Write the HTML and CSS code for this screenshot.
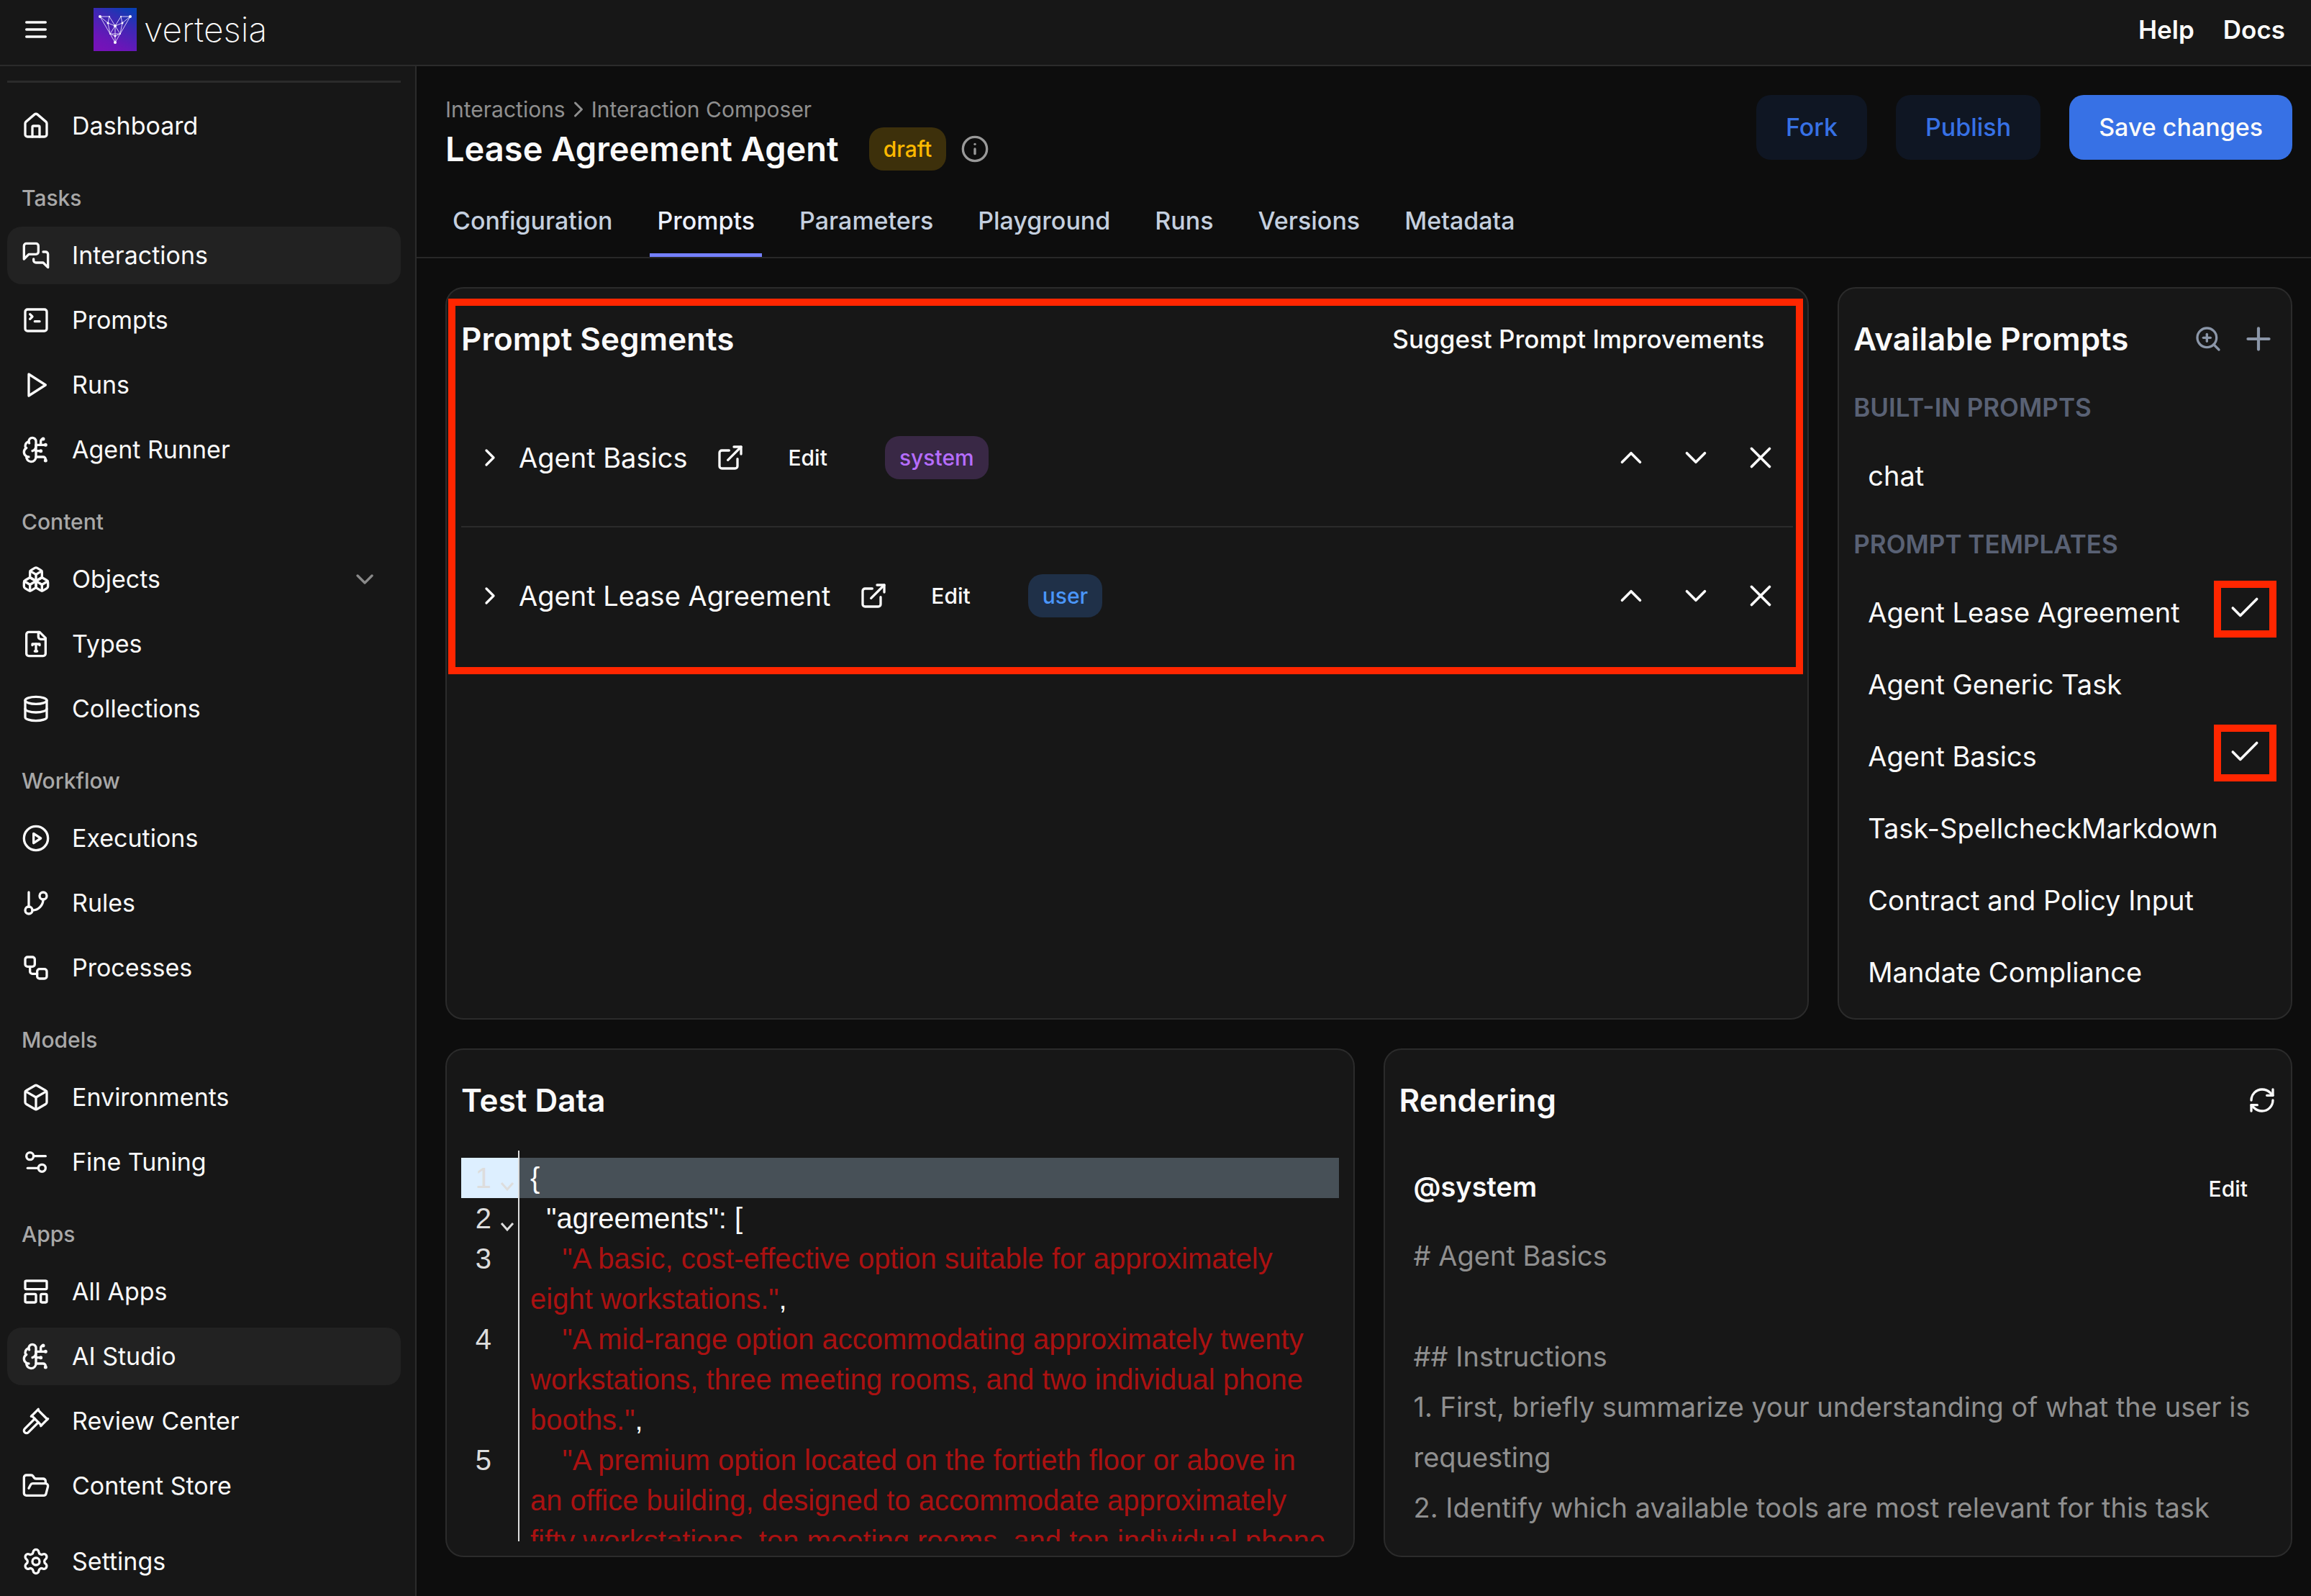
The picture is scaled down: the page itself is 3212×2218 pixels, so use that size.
FILE: index.html
```html
<!DOCTYPE html>
<html lang="en">

<head>
    <meta charset="UTF-8">
    <meta name="viewport" content="width=device-width, initial-scale=1.0">
    <title>Lease Agreement Agent - Vertesia</title>
    <link rel="stylesheet" href="styles.css">
</head>

<body>
    <!-- icon sprite -->
    <svg class="sprite" xmlns="http://www.w3.org/2000/svg">
        <symbol id="i-menu" viewBox="0 0 24 24"><path d="M4 6h16M4 12h16M4 18h16"/></symbol>
        <symbol id="i-home" viewBox="0 0 24 24"><path d="M15 21v-8a1 1 0 0 0-1-1h-4a1 1 0 0 0-1 1v8"/><path d="M3 10a2 2 0 0 1 .709-1.528l7-5.999a2 2 0 0 1 2.582 0l7 5.999A2 2 0 0 1 21 10v9a2 2 0 0 1-2 2H5a2 2 0 0 1-2-2z"/></symbol>
        <symbol id="i-messages" viewBox="0 0 24 24"><path d="M14 9a2 2 0 0 1-2 2H6l-4 4V4a2 2 0 0 1 2-2h8a2 2 0 0 1 2 2z"/><path d="M18 9h2a2 2 0 0 1 2 2v11l-4-4h-6a2 2 0 0 1-2-2v-1"/></symbol>
        <symbol id="i-terminal" viewBox="0 0 24 24"><path d="m7 11 2-2-2-2"/><path d="M11 13h4"/><rect width="18" height="18" x="3" y="3" rx="2"/></symbol>
        <symbol id="i-play" viewBox="0 0 24 24"><polygon points="6 3 20 12 6 21 6 3"/></symbol>
        <symbol id="i-brain" viewBox="0 0 24 24"><path d="M12 5a3 3 0 1 0-5.997.125 4 4 0 0 0-2.526 5.77 4 4 0 0 0 .556 6.588A4 4 0 1 0 12 18Z"/><path d="M9 13a4.5 4.5 0 0 0 3-4"/><path d="M6.003 5.125A3 3 0 0 0 6.401 6.5"/><path d="M3.477 10.896a4 4 0 0 1 .585-.396"/><path d="M6 18a4 4 0 0 1-1.967-.516"/><path d="M12 13h4"/><path d="M12 18h6a2 2 0 0 1 2 2v1"/><path d="M12 8h8"/><path d="M16 8V5a2 2 0 0 1 2-2"/><circle cx="16" cy="13" r=".5"/><circle cx="18" cy="3" r=".5"/><circle cx="20" cy="21" r=".5"/><circle cx="20" cy="8" r=".5"/></symbol>
        <symbol id="i-boxes" viewBox="0 0 24 24"><path d="M2.97 12.92A2 2 0 0 0 2 14.63v3.24a2 2 0 0 0 .97 1.71l3 1.8a2 2 0 0 0 2.06 0L12 19v-5.5l-5-3-4.03 2.42Z"/><path d="m7 16.5-4.74-2.85"/><path d="m7 16.5 5-3"/><path d="M7 16.5v5.17"/><path d="M12 13.5V19l3.97 2.38a2 2 0 0 0 2.06 0l3-1.8a2 2 0 0 0 .97-1.71v-3.24a2 2 0 0 0-.97-1.71L17 10.5l-5 3Z"/><path d="m17 16.5-5-3"/><path d="m17 16.5 4.74-2.85"/><path d="M17 16.5v5.17"/><path d="M7.97 4.42A2 2 0 0 0 7 6.13v4.37l5 3 5-3V6.13a2 2 0 0 0-.97-1.71l-3-1.8a2 2 0 0 0-2.06 0l-3 1.8Z"/><path d="M12 8 7.26 5.15"/><path d="m12 8 4.74-2.85"/><path d="M12 13.5V8"/></symbol>
        <symbol id="i-file-type" viewBox="0 0 24 24"><path d="M15 2H6a2 2 0 0 0-2 2v16a2 2 0 0 0 2 2h12a2 2 0 0 0 2-2V7Z"/><path d="M14 2v4a2 2 0 0 0 2 2h4"/><path d="M9 13v-1h6v1"/><path d="M12 12v6"/><path d="M11 18h2"/></symbol>
        <symbol id="i-database" viewBox="0 0 24 24"><ellipse cx="12" cy="5" rx="9" ry="3"/><path d="M3 5V19A9 3 0 0 0 21 19V5"/><path d="M3 12A9 3 0 0 0 21 12"/></symbol>
        <symbol id="i-circle-play" viewBox="0 0 24 24"><circle cx="12" cy="12" r="10"/><polygon points="10 8 16 12 10 16 10 8"/></symbol>
        <symbol id="i-branch" viewBox="0 0 24 24"><path d="M6 3v12"/><circle cx="18" cy="6" r="3"/><circle cx="6" cy="18" r="3"/><path d="M18 9a9 9 0 0 1-9 9"/></symbol>
        <symbol id="i-workflow" viewBox="0 0 24 24"><rect width="8" height="8" x="3" y="3" rx="2"/><path d="M7 11v4a2 2 0 0 0 2 2h4"/><rect width="8" height="8" x="13" y="13" rx="2"/></symbol>
        <symbol id="i-box" viewBox="0 0 24 24"><path d="M21 8a2 2 0 0 0-1-1.73l-7-4a2 2 0 0 0-2 0l-7 4A2 2 0 0 0 3 8v8a2 2 0 0 0 1 1.73l7 4a2 2 0 0 0 2 0l7-4A2 2 0 0 0 21 16Z"/><path d="m3.3 7 8.7 5 8.7-5"/><path d="M12 22V12"/></symbol>
        <symbol id="i-tuning" viewBox="0 0 24 24"><path d="M20 7h-9"/><path d="M14 17H5"/><circle cx="17" cy="17" r="3"/><circle cx="7" cy="7" r="3"/></symbol>
        <symbol id="i-layout" viewBox="0 0 24 24"><rect width="18" height="7" x="3" y="3" rx="1"/><rect width="9" height="7" x="3" y="14" rx="1"/><rect width="5" height="7" x="16" y="14" rx="1"/></symbol>
        <symbol id="i-gavel" viewBox="0 0 24 24"><path d="m14 13-8.381 8.38a1 1 0 0 1-3.001-3l8.384-8.381"/><path d="m16 16 6-6"/><path d="m21.5 10.5-8-8"/><path d="m8 8 6-6"/><path d="m8.5 7.5 8 8"/></symbol>
        <symbol id="i-folder" viewBox="0 0 24 24"><path d="m6 14 1.5-2.9A2 2 0 0 1 9.24 10H20a2 2 0 0 1 1.94 2.5l-1.54 6a2 2 0 0 1-1.95 1.5H4a2 2 0 0 1-2-2V5a2 2 0 0 1 2-2h3.9a2 2 0 0 1 1.69.9l.81 1.2a2 2 0 0 0 1.67.9H18a2 2 0 0 1 2 2v2"/></symbol>
        <symbol id="i-settings" viewBox="0 0 24 24"><path d="M9.671 4.136a2.34 2.34 0 0 1 4.659 0 2.34 2.34 0 0 0 3.319 1.915 2.34 2.34 0 0 1 2.33 4.033 2.34 2.34 0 0 0 0 3.831 2.34 2.34 0 0 1-2.33 4.033 2.34 2.34 0 0 0-3.319 1.915 2.34 2.34 0 0 1-4.659 0 2.34 2.34 0 0 0-3.32-1.915 2.34 2.34 0 0 1-2.33-4.033 2.34 2.34 0 0 0 0-3.831A2.34 2.34 0 0 1 6.35 6.051a2.34 2.34 0 0 0 3.319-1.915"/><circle cx="12" cy="12" r="3"/></symbol>
        <symbol id="i-down" viewBox="0 0 24 24"><path d="m6 9 6 6 6-6"/></symbol>
        <symbol id="i-up" viewBox="0 0 24 24"><path d="m18 15-6-6-6 6"/></symbol>
        <symbol id="i-right" viewBox="0 0 24 24"><path d="m9 18 6-6-6-6"/></symbol>
        <symbol id="i-x" viewBox="0 0 24 24"><path d="M18 6 6 18"/><path d="m6 6 12 12"/></symbol>
        <symbol id="i-info" viewBox="0 0 24 24"><circle cx="12" cy="12" r="10"/><path d="M12 16v-4"/><path d="M12 8h.01"/></symbol>
        <symbol id="i-external" viewBox="0 0 24 24"><path d="M15 3h6v6"/><path d="M10 14 21 3"/><path d="M18 13v6a2 2 0 0 1-2 2H5a2 2 0 0 1-2-2V8a2 2 0 0 1 2-2h6"/></symbol>
        <symbol id="i-zoom" viewBox="0 0 24 24"><circle cx="11" cy="11" r="8"/><path d="m21 21-4.35-4.35"/><path d="M11 8v6"/><path d="M8 11h6"/></symbol>
        <symbol id="i-plus" viewBox="0 0 24 24"><path d="M5 12h14"/><path d="M12 5v14"/></symbol>
        <symbol id="i-check" viewBox="0 0 24 24"><path d="M20 6 9 17l-5-5"/></symbol>
        <symbol id="i-refresh" viewBox="0 0 24 24"><path d="M3 12a9 9 0 0 1 9-9 9.75 9.75 0 0 1 6.74 2.74L21 8"/><path d="M21 3v5h-5"/><path d="M21 12a9 9 0 0 1-9 9 9.75 9.75 0 0 1-6.74-2.74L3 16"/><path d="M8 16H3v5"/></symbol>
    </svg>

    <header class="topbar">
        <button class="icon-btn" aria-label="Menu"><svg class="icon"><use href="#i-menu"/></svg></button>
        <a class="brand" href="#">
            <svg class="logo" viewBox="0 0 60 60">
                <defs>
                    <linearGradient id="logo-bg" x1=".3" y1="1" x2=".8" y2="0">
                        <stop offset="0" stop-color="#7512b8"/>
                        <stop offset=".2" stop-color="#6a16b8"/>
                        <stop offset=".65" stop-color="#3d28b4"/>
                        <stop offset="1" stop-color="#0a3fb4"/>
                    </linearGradient>
                </defs>
                <rect width="60" height="60" fill="url(#logo-bg)"/>
                <g fill="none" stroke="#d8ccf5" stroke-width="1">
                    <path d="M9 12H22L30 25 38 12H51L30 48Z"/>
                    <path d="M9 12 20 21 30 25 40 21 51 12M22 12 20 21 23 36H37L40 21 38 12M30 25 23 36 30 39 37 36ZM30 25V48"/>
                </g>
                <g fill="#fff">
                    <circle cx="9" cy="12" r="2"/><circle cx="51" cy="12" r="2"/><circle cx="22" cy="12" r="1"/><circle cx="38" cy="12" r="1"/>
                    <circle cx="20" cy="21" r="1.5"/><circle cx="40" cy="21" r="1.5"/><circle cx="30" cy="25" r="2"/><circle cx="23" cy="36" r="1"/>
                    <circle cx="37" cy="36" r="1"/><circle cx="30" cy="39" r="1.5"/><circle cx="30" cy="48" r="2"/>
                </g>
            </svg>
            <span>vertesia</span>
        </a>
        <nav class="top-links">
            <a href="#">Help</a>
            <a href="#">Docs</a>
        </nav>
    </header>

    <div class="shell">
        <aside class="sidebar">
            <hr>
            <nav class="side-nav">
                <a class="nav-item" href="#"><svg class="icon"><use href="#i-home"/></svg>Dashboard</a>

                <h2>Tasks</h2>
                <a class="nav-item active" href="#"><svg class="icon"><use href="#i-messages"/></svg>Interactions</a>
                <a class="nav-item" href="#"><svg class="icon"><use href="#i-terminal"/></svg>Prompts</a>
                <a class="nav-item" href="#"><svg class="icon"><use href="#i-play"/></svg>Runs</a>
                <a class="nav-item" href="#"><svg class="icon"><use href="#i-brain"/></svg>Agent Runner</a>

                <h2>Content</h2>
                <a class="nav-item" href="#"><svg class="icon"><use href="#i-boxes"/></svg>Objects<svg class="icon caret"><use href="#i-down"/></svg></a>
                <a class="nav-item" href="#"><svg class="icon"><use href="#i-file-type"/></svg>Types</a>
                <a class="nav-item" href="#"><svg class="icon"><use href="#i-database"/></svg>Collections</a>

                <h2>Workflow</h2>
                <a class="nav-item" href="#"><svg class="icon"><use href="#i-circle-play"/></svg>Executions</a>
                <a class="nav-item" href="#"><svg class="icon"><use href="#i-branch"/></svg>Rules</a>
                <a class="nav-item" href="#"><svg class="icon"><use href="#i-workflow"/></svg>Processes</a>

                <h2>Models</h2>
                <a class="nav-item" href="#"><svg class="icon"><use href="#i-box"/></svg>Environments</a>
                <a class="nav-item" href="#"><svg class="icon"><use href="#i-tuning"/></svg>Fine Tuning</a>

                <h2>Apps</h2>
                <a class="nav-item" href="#"><svg class="icon"><use href="#i-layout"/></svg>All Apps</a>
                <a class="nav-item active" href="#"><svg class="icon"><use href="#i-brain"/></svg>AI Studio</a>
                <a class="nav-item" href="#"><svg class="icon"><use href="#i-gavel"/></svg>Review Center</a>
                <a class="nav-item" href="#"><svg class="icon"><use href="#i-folder"/></svg>Content Store</a>
            </nav>
            <a class="nav-item" href="#"><svg class="icon"><use href="#i-settings"/></svg>Settings</a>
        </aside>

        <main class="main">
            <div class="page-head">
                <div class="heading">
                    <nav class="crumbs">
                        <a href="#">Interactions</a>
                        <svg class="icon"><use href="#i-right"/></svg>
                        <a href="#">Interaction Composer</a>
                    </nav>
                    <div class="title-row">
                        <h1>Lease Agreement Agent</h1>
                        <span class="badge draft">draft</span>
                        <svg class="icon info"><use href="#i-info"/></svg>
                    </div>
                </div>
                <div class="actions">
                    <button class="btn">Fork</button>
                    <button class="btn">Publish</button>
                    <button class="btn primary">Save changes</button>
                </div>
            </div>

            <nav class="tabs">
                <a href="#">Configuration</a>
                <a class="current" href="#">Prompts</a>
                <a href="#">Parameters</a>
                <a href="#">Playground</a>
                <a href="#">Runs</a>
                <a href="#">Versions</a>
                <a href="#">Metadata</a>
            </nav>

            <div class="content">
                <div class="row-top">
                    <section class="card segments">
                        <div class="highlight"></div>
                        <div class="card-head">
                            <h3>Prompt Segments</h3>
                            <button class="suggest">Suggest Prompt Improvements</button>
                        </div>
                        <ul class="segment-list">
                            <li>
                                <button class="icon-btn" aria-label="Expand"><svg class="icon"><use href="#i-right"/></svg></button>
                                <span class="name">Agent Basics</span>
                                <a class="open" href="#" aria-label="Open"><svg class="icon"><use href="#i-external"/></svg></a>
                                <button class="edit">Edit</button>
                                <span class="badge system">system</span>
                                <div class="order">
                                    <button class="icon-btn" aria-label="Move up"><svg class="icon big"><use href="#i-up"/></svg></button>
                                    <button class="icon-btn" aria-label="Move down"><svg class="icon big"><use href="#i-down"/></svg></button>
                                    <button class="icon-btn" aria-label="Remove"><svg class="icon big"><use href="#i-x"/></svg></button>
                                </div>
                            </li>
                            <li>
                                <button class="icon-btn" aria-label="Expand"><svg class="icon"><use href="#i-right"/></svg></button>
                                <span class="name">Agent Lease Agreement</span>
                                <a class="open" href="#" aria-label="Open"><svg class="icon"><use href="#i-external"/></svg></a>
                                <button class="edit">Edit</button>
                                <span class="badge user">user</span>
                                <div class="order">
                                    <button class="icon-btn" aria-label="Move up"><svg class="icon big"><use href="#i-up"/></svg></button>
                                    <button class="icon-btn" aria-label="Move down"><svg class="icon big"><use href="#i-down"/></svg></button>
                                    <button class="icon-btn" aria-label="Remove"><svg class="icon big"><use href="#i-x"/></svg></button>
                                </div>
                            </li>
                        </ul>
                    </section>

                    <section class="card available">
                        <div class="card-head">
                            <h3>Available Prompts</h3>
                            <div class="tools">
                                <button class="icon-btn" aria-label="Search"><svg class="icon"><use href="#i-zoom"/></svg></button>
                                <button class="icon-btn" aria-label="Add"><svg class="icon plus"><use href="#i-plus"/></svg></button>
                            </div>
                        </div>
                        <h4>BUILT-IN PROMPTS</h4>
                        <ul>
                            <li>chat</li>
                        </ul>
                        <h4>PROMPT TEMPLATES</h4>
                        <ul>
                            <li>Agent Lease Agreement<span class="mark"><svg class="icon big"><use href="#i-check"/></svg></span></li>
                            <li>Agent Generic Task</li>
                            <li>Agent Basics<span class="mark"><svg class="icon big"><use href="#i-check"/></svg></span></li>
                            <li>Task-SpellcheckMarkdown</li>
                            <li>Contract and Policy Input</li>
                            <li>Mandate Compliance</li>
                        </ul>
                    </section>
                </div>

                <div class="row-bottom">
                    <section class="card">
                        <div class="card-head">
                            <h3>Test Data</h3>
                        </div>
                        <div class="editor">
                            <div class="line active"><span class="num">1</span><span class="fold"><svg viewBox="0 0 20 14"><path d="M2 2l8 9 8-9"/></svg></span><code>{</code></div>
                            <div class="line"><span class="num">2</span><span class="fold"><svg viewBox="0 0 20 14"><path d="M2 2l8 9 8-9"/></svg></span><code>  "agreements": [</code></div>
                            <div class="line"><span class="num">3</span><span class="fold"></span><code>    <i>"A basic, cost-effective option suitable for approximately eight workstations."</i>,</code></div>
                            <div class="line"><span class="num">4</span><span class="fold"></span><code>    <i>"A mid-range option accommodating approximately twenty workstations, three meeting rooms, and two individual phone booths."</i>,</code></div>
                            <div class="line"><span class="num">5</span><span class="fold"></span><code>    <i>"A premium option located on the fortieth floor or above in an office building, designed to accommodate approximately fifty workstations, ten meeting rooms, and ten individual phone</i></code></div>
                        </div>
                    </section>

                    <section class="card">
                        <div class="card-head">
                            <h3>Rendering</h3>
                            <button class="icon-btn" aria-label="Refresh"><svg class="icon"><use href="#i-refresh"/></svg></button>
                        </div>
                        <div class="rendering">
                            <div class="role-row">
                                <h4>@system</h4>
                                <button class="edit">Edit</button>
                            </div>
                            <div class="output"># Agent Basics

## Instructions
1. First, briefly summarize your understanding of what the user is requesting
2. Identify which available tools are most relevant for this task</div>
                        </div>
                    </section>
                </div>
            </div>
        </main>
    </div>
</body>

</html>
```

FILE: styles.css
```css
* {
    box-sizing: border-box;
}

body {
    margin: 0;
    height: 100vh;
    display: flex;
    flex-direction: column;
    overflow: hidden;
    background-color: #0d0d0d;
    color: #fafafa;
    font-family: Inter, "Liberation Sans", sans-serif;
    font-size: 38px;
    line-height: 60px;
}

h1,
h2,
h3,
h4,
ul {
    margin: 0;
    padding: 0;
    list-style: none;
}

a {
    color: inherit;
    text-decoration: none;
}

button {
    padding: 0;
    border: none;
    background: none;
    color: inherit;
    font: inherit;
    cursor: pointer;
}

/* icons */
.sprite {
    display: none;
}

.icon {
    display: block;
    flex: none;
    width: 40px;
    height: 40px;
    fill: none;
    stroke: currentColor;
    stroke-width: 2;
    stroke-linecap: round;
    stroke-linejoin: round;
}

.icon.big {
    width: 50px;
    height: 50px;
    stroke-width: 1.75;
}

/* top bar */
.topbar {
    flex: none;
    display: flex;
    align-items: center;
    height: 92px;
    padding: 0 36px 8px 30px;
    background-color: #171717;
    border-bottom: 2px solid #2b2b2b;
}

.brand {
    display: flex;
    align-items: center;
    gap: 10px;
    margin-left: 60px;
    font-size: 48px;
    font-weight: 200;
}

.logo {
    width: 60px;
    height: 60px;
}

.top-links {
    display: flex;
    gap: 40px;
    margin-left: auto;
    font-size: 35px;
    font-weight: 600;
}

/* layout */
.shell {
    flex: 1;
    display: flex;
    min-height: 0;
}

/* sidebar */
.sidebar {
    flex: none;
    display: flex;
    flex-direction: column;
    width: 579px;
    padding: 20px 20px 8px 10px;
    background-color: #171717;
    border-right: 2px solid #2b2b2b;
}

.sidebar hr {
    width: 100%;
    height: 3px;
    margin: 0 0 20px;
    border: none;
    background-color: #2b2b2b;
}

.side-nav {
    flex: 1;
    display: flex;
    flex-direction: column;
    gap: 10px;
}

.side-nav h2 {
    height: 70px;
    margin-top: 10px;
    padding-left: 20px;
    font-size: 30px;
    font-weight: 500;
    line-height: 80px;
    color: #a8a8a8;
}

.nav-item {
    display: flex;
    align-items: center;
    gap: 30px;
    height: 80px;
    padding: 0 30px 0 20px;
    border-radius: 20px;
    font-size: 34px;
}

.nav-item.active {
    background-color: #222222;
}

.nav-item .caret {
    margin-left: auto;
    color: #8a8a8a;
}

/* page header */
.main {
    flex: 1;
    display: flex;
    flex-direction: column;
    min-width: 0;
}

.page-head {
    display: flex;
    justify-content: space-between;
    align-items: flex-start;
    padding: 40px 26px 0 40px;
}

.crumbs {
    display: flex;
    align-items: center;
    height: 40px;
    font-size: 30px;
    color: #8f8f8f;
}

.crumbs .icon {
    width: 36px;
    height: 36px;
}

.title-row {
    display: flex;
    align-items: center;
    height: 70px;
}

h1 {
    font-size: 47px;
    font-weight: 600;
}

.badge {
    display: block;
    padding: 0 20px;
    border-radius: 20px;
    font-size: 30px;
    font-weight: 500;
    line-height: 60px;
}

.draft {
    margin: 0 20px 0 42px;
    background-color: #3d300b;
    color: #fdb900;
}

.system {
    background-color: #392845;
    color: #b66dff;
}

.user {
    background-color: #1f3048;
    color: #4a96fb;
}

.info {
    color: #999999;
}

.actions {
    display: flex;
    gap: 40px;
}

.btn {
    height: 90px;
    padding: 0 41px;
    border-radius: 20px;
    background-color: #0f1623;
    color: #3771e5;
    font-size: 34px;
    font-weight: 500;
}

.btn.primary {
    background-color: #3771e5;
    color: #fafafa;
}

.tabs {
    display: flex;
    gap: 42px;
    margin-top: 15px;
    padding-left: 40px;
    border-bottom: 2px solid #272727;
    font-size: 34px;
    font-weight: 500;
    color: #c4cfdf;
}

.tabs a {
    height: 100px;
    padding: 0 10px;
    line-height: 100px;
}

.tabs .current {
    color: #edf1ff;
    border-bottom: 5px solid #7480ff;
}

/* cards */
.content {
    flex: 1;
    display: grid;
    grid-template-rows: 59fr 41fr;
    gap: 40px;
    min-height: 0;
    padding: 40px 26px 54px 40px;
}

.row-top,
.row-bottom {
    display: grid;
    gap: 40px;
    min-height: 0;
}

.row-top {
    grid-template-columns: 3fr 1fr;
}

.row-bottom {
    grid-template-columns: 1fr 1fr;
}

.card {
    position: relative;
    display: flex;
    flex-direction: column;
    min-width: 0;
    min-height: 0;
    padding: 20px;
    background-color: #171717;
    border: 2px solid #2b2b2b;
    border-radius: 25px;
}

.card-head {
    flex: none;
    display: flex;
    justify-content: space-between;
    align-items: center;
    height: 100px;
}

.card h3 {
    font-size: 44px;
    font-weight: 600;
}

.suggest {
    padding-right: 40px;
    font-size: 35px;
    font-weight: 500;
}

/* red frame around the segments */
.highlight {
    position: absolute;
    top: 14px;
    left: 2px;
    right: 6px;
    height: 522px;
    border: 10px solid #ff2600;
    pointer-events: none;
}

.segment-list {
    margin-top: 20px;
}

.segment-list li {
    display: flex;
    align-items: center;
    height: 190px;
    padding-left: 20px;
}

.segment-list li + li {
    height: 192px;
    border-top: 2px solid #2b2b2b;
}

.name {
    margin-left: 20px;
}

.open {
    margin: 0 60px 0 40px;
}

.edit {
    font-size: 30px;
    font-weight: 500;
}

.segment-list .badge {
    margin-left: 80px;
}

.order {
    display: flex;
    gap: 40px;
    margin-left: auto;
    padding-right: 20px;
}

.available {
    overflow: hidden;
}

.tools {
    display: flex;
    align-items: center;
    gap: 25px;
    color: #8b96a8;
}

.icon.plus {
    width: 50px;
    height: 50px;
}

.available h4 {
    height: 90px;
    font-size: 35px;
    font-weight: 600;
    line-height: 90px;
    color: #596174;
}

.available li {
    display: flex;
    align-items: center;
    justify-content: space-between;
    height: 100px;
    padding-left: 20px;
}

.mark {
    margin-bottom: 10px;
    padding: 3px 9px 6px 8px;
    border: 10px solid #ff2600;
}

/* json editor */
.editor {
    flex: 1;
    display: flex;
    flex-direction: column;
    min-height: 0;
    margin-top: 20px;
    padding-top: 10px;
    overflow: hidden;
    background: linear-gradient(#dddddd, #dddddd) 79px 0 / 2px 100% no-repeat;
    font-family: "Liberation Sans", Arial, sans-serif;
    font-size: 40px;
    line-height: 56px;
}

.line {
    flex: none;
    display: grid;
    grid-template-columns: 42px 39px 1fr;
}

.num {
    text-align: right;
    color: #dddddd;
}

.fold {
    padding: 33px 2px 0 12px;
    margin-right: 2px;
    line-height: 0;
}

.fold svg {
    width: 20px;
    height: 14px;
    fill: none;
    stroke: #dddddd;
    stroke-width: 3;
}

.line code {
    padding: 0 5px 0 15px;
    font-family: inherit;
    font-size: 40px;
    white-space: pre-wrap;
}

.line i {
    font-style: normal;
    color: #aa1111;
}

.line.active .num,
.line.active .fold {
    background-color: #ddefff;
}

.line.active code {
    background-color: #475057;
}

/* rendering */
.rendering {
    padding: 20px 20px 0;
}

.role-row {
    display: flex;
    justify-content: space-between;
    align-items: baseline;
    padding: 20px 20px 28px 0;
}

.role-row h4 {
    font-size: 38px;
    font-weight: 600;
}

.output {
    line-height: 70px;
    white-space: pre-wrap;
    color: #8f8f8f;
}
```
